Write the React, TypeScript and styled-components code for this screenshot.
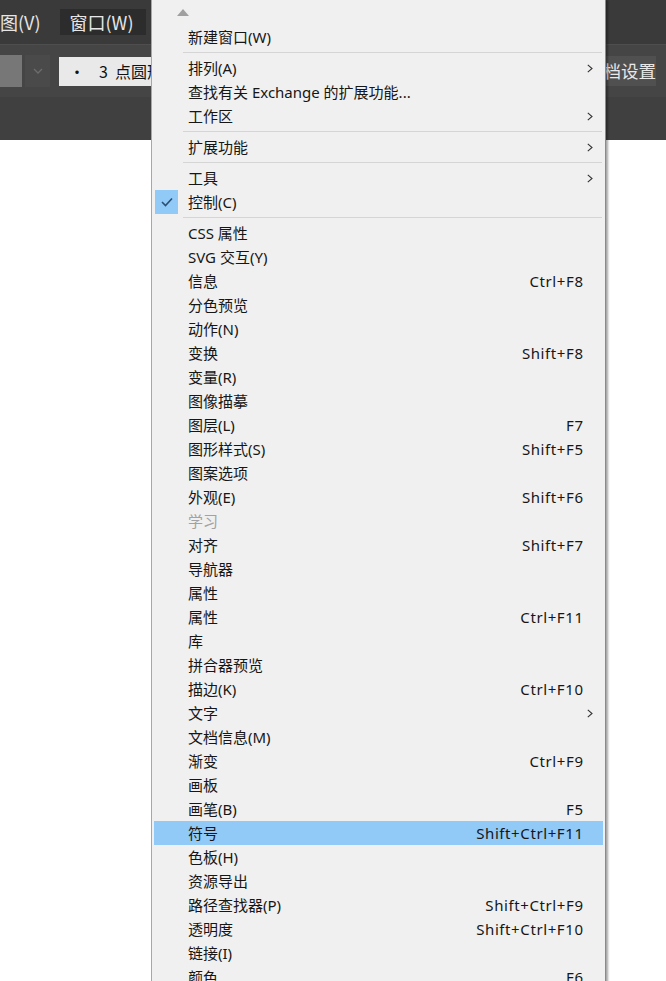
import { createGlobalStyle, styled } from 'styled-components'

const Global = createGlobalStyle`
    html, body {
        margin: 0;
        padding: 0;
        background: #ffffff;
        overflow: hidden;
    }
    body {
        font-family: "Noto Sans", "Noto Sans CJK SC", sans-serif;
    }
`

const Page = styled.div`
    position: relative;
    width: 666px;
    height: 981px;
    overflow: hidden;
    display: flex;
    flex-direction: column;
`

const MenuBar = styled.div`
    height: 44px;
    background: #3a3a3a;
    border-bottom: 1px solid #4e4e4e;
    display: flex;
    align-items: center;
    gap: 7px;
    font-family: "Noto Sans CJK SC", sans-serif;
    font-size: 18px;
    color: #e6e6e6;
`

const MenuTitle = styled.div<{ $open?: boolean; $offset?: number }>`
    height: 26px;
    line-height: 26px;
    padding: 0 12px 0 10px;
    margin-left: ${({ $offset }) => ($offset ? `${$offset}px` : '0')};
    background: ${({ $open }) => ($open ? '#2c2c2c' : 'transparent')};
`

const ToolBar = styled.div`
    height: 52px;
    background: #454545;
    display: flex;
    align-items: center;
`

const Swatch = styled.div`
    width: 22px;
    height: 32px;
    background: #777777;
`

const DropBtn = styled.div`
    width: 25px;
    height: 32px;
    margin-left: 3px;
    background: #4a4a4a;
    display: flex;
    align-items: center;
    justify-content: center;
`

const Field = styled.div`
    width: 130px;
    height: 29px;
    margin-left: 9px;
    background: #e9e9e9;
    display: flex;
    align-items: center;
    gap: 14px;
    padding-left: 10px;
    box-sizing: border-box;
    font-family: "Noto Sans CJK SC", sans-serif;
    font-size: 16px;
    color: #111;
`

const DocButton = styled.div`
    margin-left: auto;
    margin-right: 10px;
    height: 30px;
    line-height: 30px;
    padding: 0 0 0 12px;
    background: #505050;
    font-family: "Noto Sans CJK SC", sans-serif;
    font-size: 17.5px;
    color: #e8e8e8;
`

const PanelBar = styled.div`
    height: 43px;
    background: #404040;
`

const Canvas = styled.div`
    flex: 1;
    background: #ffffff;
`

const Menu = styled.div`
    position: absolute;
    left: 151px;
    top: 0;
    width: 455px;
    height: 1010px;
    box-sizing: border-box;
    background: #f0f0f0;
    border-left: 1px solid #a7a7a7;
    border-right: 1px solid #8a8a8a;
    box-shadow: 2px 0 2px rgba(0, 0, 0, 0.35);
    font-family: "Noto Sans", "Noto Sans CJK SC", sans-serif;
    font-size: 15px;
    color: #1a1a1a;
`

const ScrollUp = styled.div`
    height: 25px;
    padding-left: 25px;
    display: flex;
    align-items: center;
`

const Row = styled.div<{ $active?: boolean; $disabled?: boolean }>`
    height: 24px;
    margin: 0 2px;
    display: grid;
    grid-template-columns: 34px 1fr auto 20px;
    align-items: center;
    line-height: 24px;
    background: ${({ $active }) => ($active ? '#91c9f7' : 'transparent')};
    color: ${({ $disabled }) => ($disabled ? '#a2a2a2' : '#161616')};
`

const CheckBox = styled.div`
    width: 23px;
    height: 24px;
    margin-left: 1px;
    background: #91c9f7;
    display: flex;
    align-items: center;
    justify-content: center;
`

const Label = styled.span`
    white-space: nowrap;
`

const Shortcut = styled.span`
    white-space: nowrap;
    letter-spacing: 0.6px;
    margin-right: -0.6px;
`

const Arrow = styled.span`
    display: flex;
    padding-left: 4px;
`

const Sep = styled.div`
    height: 1px;
    margin: 3px 3px 3px 31px;
    background: #d5d5d5;
`

type Entry =
    | 'sep'
    | {
          label: string
          shortcut?: string
          sub?: boolean
          checked?: boolean
          disabled?: boolean
          active?: boolean
      }

const entries: Entry[] = [
    { label: '新建窗口(W)' },
    'sep',
    { label: '排列(A)', sub: true },
    { label: '查找有关 Exchange 的扩展功能...' },
    { label: '工作区', sub: true },
    'sep',
    { label: '扩展功能', sub: true },
    'sep',
    { label: '工具', sub: true },
    { label: '控制(C)', checked: true },
    'sep',
    { label: 'CSS 属性' },
    { label: 'SVG 交互(Y)' },
    { label: '信息', shortcut: 'Ctrl+F8' },
    { label: '分色预览' },
    { label: '动作(N)' },
    { label: '变换', shortcut: 'Shift+F8' },
    { label: '变量(R)' },
    { label: '图像描摹' },
    { label: '图层(L)', shortcut: 'F7' },
    { label: '图形样式(S)', shortcut: 'Shift+F5' },
    { label: '图案选项' },
    { label: '外观(E)', shortcut: 'Shift+F6' },
    { label: '学习', disabled: true },
    { label: '对齐', shortcut: 'Shift+F7' },
    { label: '导航器' },
    { label: '属性' },
    { label: '属性', shortcut: 'Ctrl+F11' },
    { label: '库' },
    { label: '拼合器预览' },
    { label: '描边(K)', shortcut: 'Ctrl+F10' },
    { label: '文字', sub: true },
    { label: '文档信息(M)' },
    { label: '渐变', shortcut: 'Ctrl+F9' },
    { label: '画板' },
    { label: '画笔(B)', shortcut: 'F5' },
    { label: '符号', shortcut: 'Shift+Ctrl+F11', active: true },
    { label: '色板(H)' },
    { label: '资源导出' },
    { label: '路径查找器(P)', shortcut: 'Shift+Ctrl+F9' },
    { label: '透明度', shortcut: 'Shift+Ctrl+F10' },
    { label: '链接(I)' },
    { label: '颜色', shortcut: 'F6' },
]

const Check = () => (
    <svg width="12" height="10" viewBox="0 0 12 10">
        <path d="M1 5 L4.5 8.5 L11 1.5" fill="none" stroke="#2b4f73" strokeWidth="1.6" />
    </svg>
)

const Chevron = () => (
    <svg width="6" height="9" viewBox="0 0 6 9">
        <path d="M0.8 0.8 L5 4.5 L0.8 8.2" fill="none" stroke="#333" strokeWidth="1.1" />
    </svg>
)

export default function App() {
    return (
        <>
            <Global />
            <Page>
                <MenuBar>
                    <MenuTitle $offset={-28}>视图(V)</MenuTitle>
                    <MenuTitle $open>窗口(W)</MenuTitle>
                </MenuBar>
                <ToolBar>
                    <Swatch />
                    <DropBtn>
                        <svg width="10" height="6" viewBox="0 0 10 6">
                            <path d="M1 1 L5 5 L9 1" fill="none" stroke="#6c6c6c" strokeWidth="1.3" />
                        </svg>
                    </DropBtn>
                    <Field>
                        <span>•</span>
                        <span>3&nbsp;&nbsp;点圆形</span>
                    </Field>
                    <DocButton>文档设置</DocButton>
                </ToolBar>
                <PanelBar />
                <Canvas />

                <Menu>
                    <ScrollUp>
                        <svg width="12" height="7" viewBox="0 0 12 7">
                            <path d="M0 7 L6 0 L12 7 Z" fill="#a0a0a0" />
                        </svg>
                    </ScrollUp>
                    {entries.map((e, i) =>
                        e === 'sep' ? (
                            <Sep key={i} />
                        ) : (
                            <Row key={i} $active={e.active} $disabled={e.disabled}>
                                <span>
                                    {e.checked && (
                                        <CheckBox>
                                            <Check />
                                        </CheckBox>
                                    )}
                                </span>
                                <Label>{e.label}</Label>
                                <Shortcut>{e.shortcut}</Shortcut>
                                <Arrow>{e.sub && <Chevron />}</Arrow>
                            </Row>
                        )
                    )}
                </Menu>
            </Page>
        </>
    )
}
